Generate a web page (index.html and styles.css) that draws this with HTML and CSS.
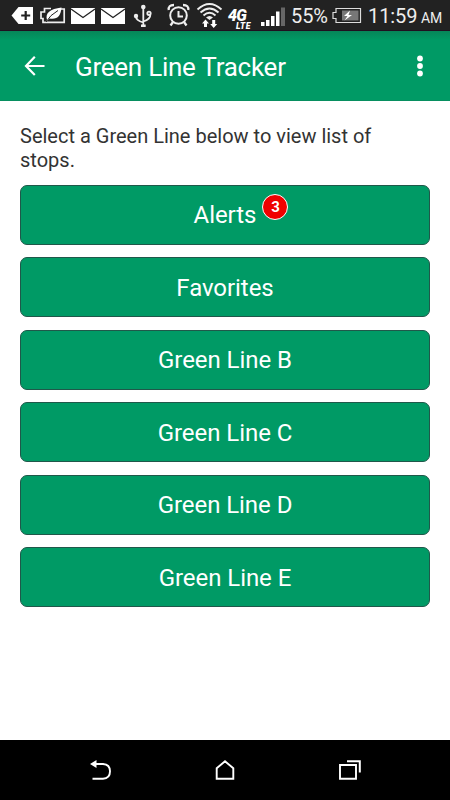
FILE: index.html
```html
<!DOCTYPE html>
<html lang="en">
<head>
<meta charset="utf-8">
<title>Green Line Tracker</title>
<link rel="stylesheet" href="styles.css">
</head>
<body>
<div class="screen">
  <div class="status">
    <svg width="36" height="31" viewBox="0 0 36 31"><path d="M11.500 15.500 18.500 7H33V24H18.500Z" fill="#fff"/><path d="M25.700 11V20M21.200 15.500H30.200" stroke="#222" stroke-width="2.200"/></svg>
    <svg width="32" height="31" viewBox="36 0 32 31"><path d="M51 8.500H44.500V12H41V18.500H43V22.300H64.200V9H61" fill="none" stroke="#eee" stroke-width="1.700"/><path d="M47 20C45 13 50 9 61.500 7.500 61 16 57 20 49.500 18.500L46 22" fill="#fff"/><path d="M46 22Q50 15 58 10.500" fill="none" stroke="#222" stroke-width="1"/></svg>
    <svg width="30" height="31" viewBox="68 0 30 31"><path d="M71 8H95V24H71Z" fill="#fff"/><path d="M71 9 83 17.500 95 9" fill="none" stroke="#222" stroke-width="1.300"/></svg>
    <svg width="30" height="31" viewBox="98 0 30 31"><path d="M101 8H125V24H101Z" fill="#fff"/><path d="M101 9 113 17.500 125 9" fill="none" stroke="#222" stroke-width="1.300"/></svg>
    <svg width="30" height="31" viewBox="128 0 30 31"><g fill="none" stroke="#eee" stroke-width="1.800"><path d="M143.300 7V26M136 16.500Q136 20.500 143.300 22.500M143.300 21.500Q150.500 19 150.300 15"/><circle cx="149" cy="13.300" r="1.700"/></g><g fill="#eee"><circle cx="143.300" cy="7" r="2.300"/><circle cx="136" cy="16" r="2.200"/><path d="M141 24.500H145.700V27H141Z"/></g></svg>
    <svg width="35" height="31" viewBox="158 0 35 31"><g fill="none" stroke="#eee" stroke-width="2"><circle cx="178.500" cy="15.500" r="8.300"/><path d="M178.500 11V16.500H183"/><path d="M168.800 10Q168 5 174 5M188.200 10Q189 5 183 5M173 22 170.500 25.500M184 22 186.500 25.500" stroke-width="2.300"/></g></svg>
    <svg width="32" height="31" viewBox="193 0 32 31"><g fill="none" stroke="#eee" stroke-width="1.900"><path d="M197.500 9.500Q209.500-1.500 221.500 9.500M200.500 12.500Q209.500 4.500 218.500 12.500M203.500 15.500Q209.500 10 215.500 15.500"/></g><path d="M206 17.500Q209.500 14.300 213 17.500L209.500 20Z" fill="#eee"/><path d="M205.500 19.500 209 23.500H207V27H204V23.500H202ZM213.700 28 210.200 24H212.200V20H215.200V24H217.200Z" fill="#fff"/></svg>
    <div class="network"><span class="gen">4G</span><span class="lte">LTE</span></div>
    <svg width="31" height="31" viewBox="257 0 31 31"><path d="M261 22H264.500V26H261ZM266 20H269.500V26H266ZM271 16H274.500V26H271ZM276 11.500H279.500V26H276Z" fill="#fff"/><path d="M281 7.500H285V26H281Z" fill="#666"/></svg>
    <span class="percent">55%</span>
    <svg width="34" height="31" viewBox="330 0 34 31"><path d="M336 8.500H360.500V22.500H336V18.500H333V12.500H336Z" fill="none" stroke="#ddd" stroke-width="1.200"/><path d="M342 10.500H358.500V20.500H342Z" fill="#777"/><path d="M350 10.500 344 16H347.500L344.500 20.500 352 15H348.500Z" fill="#fff"/></svg>
    <span class="clock">11:59</span><span class="meridiem">AM</span>
  </div>
  <header class="appbar">
    <svg class="back" width="22" height="22" viewBox="0 0 22 22"><path d="M10.800 1.800 2 11 10.800 20M2.500 11H20.500" fill="none" stroke="#fff" stroke-width="2.200"/></svg>
    <h1 class="title">Green Line Tracker</h1>
    <svg width="6" height="22" viewBox="0 0 6 22" fill="#fff"><circle cx="3" cy="3.500" r="2.900"/><circle cx="3" cy="11" r="2.900"/><circle cx="3" cy="18.500" r="2.900"/></svg>
  </header>
  <main class="content">
    <p class="intro">Select a Green Line below to view list of stops.</p>
    <div class="list">
      <button class="item"><span class="label">Alerts<span class="badge">3</span></span></button>
      <button class="item"><span class="label">Favorites</span></button>
      <button class="item"><span class="label">Green Line B</span></button>
      <button class="item"><span class="label">Green Line C</span></button>
      <button class="item"><span class="label">Green Line D</span></button>
      <button class="item"><span class="label">Green Line E</span></button>
    </div>
  </main>
  <nav class="navbar">
    <svg width="26" height="26" viewBox="87 757 26 26"><path d="M93 764H103Q110 764.500 110 771.300 110 778.500 103 778.700H92.500" fill="none" stroke="#fff" stroke-width="1.900"/><path d="M90 764 96.500 760V768Z" fill="#fff"/></svg>
    <svg width="26" height="26" viewBox="212 757 26 26"><path d="M225 761.300 233.300 768.200V778.800H216.700V768.200Z" fill="none" stroke="#fff" stroke-width="1.900"/></svg>
    <svg width="26" height="26" viewBox="337 757 26 26"><g fill="none" stroke="#fff"><path d="M340 765H356V778.700H340Z" stroke-width="1.900"/><path d="M347 761.200H359.800V772.500" stroke-width="2"/></g></svg>
  </nav>
</div>
</body>
</html>
```
FILE: styles.css
```css
* { box-sizing: border-box; }
body { margin: 0; font-family: Roboto, "Liberation Sans", sans-serif; background: #fff; }
.screen { width: 450px; height: 800px; display: flex; flex-direction: column; overflow: hidden; }
svg { display: block; flex: none; }
.status { height: 31px; flex: none; display: flex; background: #222; border-bottom: 1px solid #201020; color: #eee; white-space: nowrap; line-height: 31px; }
.network { width: 32px; padding: 9px 0 0 3px; font-style: italic; font-weight: 900; color: #fff; }
.gen { display: block; font-size: 16px; line-height: 13px; letter-spacing: -.8px; }
.lte { display: block; font-size: 8.500px; line-height: 8px; padding-left: 8px; letter-spacing: .5px; }
.percent { width: 42px; padding: 1px 0 0 3px; font-size: 20px; letter-spacing: -.1px; }
.clock { width: 57px; padding: 1px 0 0 4px; font-size: 20px; letter-spacing: -.1px; }
.meridiem { padding-top: 3px; font-size: 14px; letter-spacing: -.2px; }
.appbar { height: 70px; flex: none; display: flex; align-items: center; padding: 0 27px 0 24px; background: linear-gradient(#068658, #009a65 9px); border-bottom: 1px solid #078f60; }
.title { flex: 1; margin: 2px 0 0 29px; font-size: 26px; font-weight: 400; color: #fff; line-height: 32px; letter-spacing: -.25px; }
.content { flex: 1; padding: 23px 20px 0; }
.intro { margin: 0 0 12.5px; font-size: 20px; line-height: 24px; color: #333; }
.list { display: flex; flex-direction: column; gap: 12.5px; }
.item { height: 60px; display: flex; align-items: center; justify-content: center; padding: 1.500px 0 0; background: #009a65; border: 1px solid #20584a; border-radius: 7px; color: #fff; font-family: inherit; font-size: 24px; letter-spacing: -.06px; }
.label { position: relative; line-height: 30px; }
.badge { position: absolute; left: calc(100% + 6px); top: -6.500px; width: 26px; height: 26px; border: 1.500px solid #fff; border-radius: 50%; background: #f00000; font-size: 15px; font-weight: 700; line-height: 24px; text-align: center; }
.navbar { height: 60px; flex: none; display: flex; align-items: center; justify-content: space-between; padding: 0 87px; background: #000; }
```
